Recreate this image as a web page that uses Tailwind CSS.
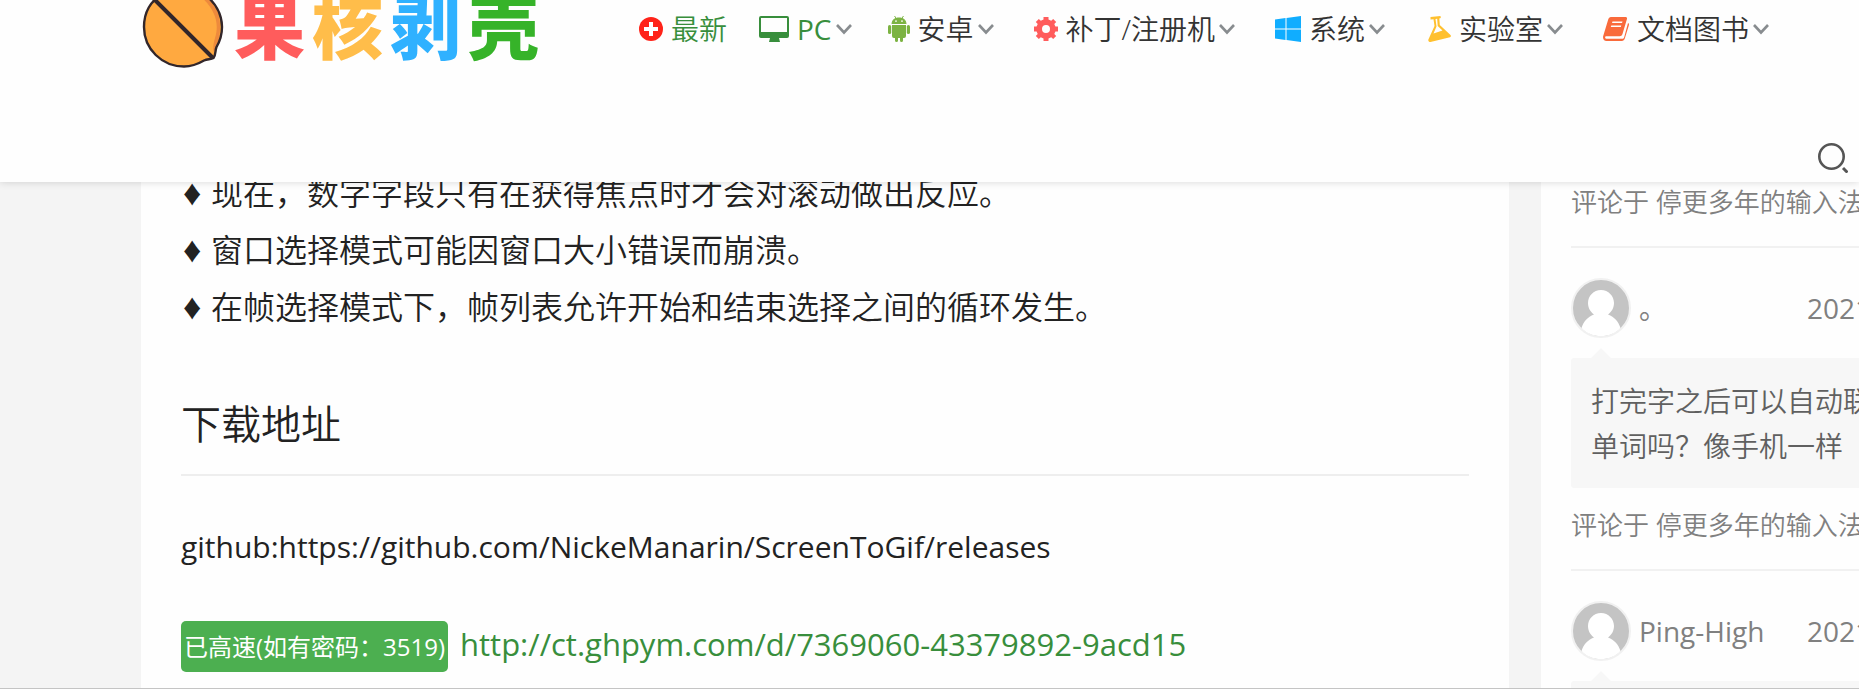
<!DOCTYPE html>
<html lang="zh-CN">
<head>
<meta charset="utf-8">
<meta name="viewport" content="width=device-width, initial-scale=1">
<title>果核剥壳</title>
<script src="https://cdn.jsdelivr.net/npm/@tailwindcss/browser@4"></script>
</head>
<body class="h-screen overflow-hidden bg-[#f4f4f4] font-['Open_Sans','Noto_Sans_CJK_SC',sans-serif] font-[350] text-[#222]">
<svg class="hidden" aria-hidden="true">
  <symbol id="chev" viewBox="0 0 16 12"><path d="M1 2l7 7.500 7-7.500" fill="none" stroke="#888c8f" stroke-width="2.600"/></symbol>
  <symbol id="avatar" viewBox="0 0 60 60"><circle cx="30" cy="30" r="29" fill="#c4c4c4" stroke="#f1f1f1" stroke-width="2"/><path d="M30 12c-7.500 0-13 6-13 13 0 5 2.500 9 6 11.500C16.500 39 12.500 43.500 10.500 50 15.500 55.500 22.500 58 30 58s14.500-2.500 19.500-8C47.500 43.500 43.500 39 37 36.500c3.500-2.500 6-6.500 6-11.500 0-7-5.500-13-13-13z" fill="#fff"/></symbol>
</svg>
<div class="flex h-full flex-col border-b border-[#c4c4c4]">
  <header class="relative z-10 h-[182px] shrink-0 bg-[#fefefe] shadow-[0_0_8px_rgba(0,0,0,0.16)]">
    <div class="flex h-[68px] items-start pl-[142px]">
      <a href="#" class="flex w-[497px] shrink-0 items-start" aria-label="果核剥壳">
        <svg class="h-[68px] w-[82px]" viewBox="0 0 82 68">
          <path d="M22-6C8 0 2 13 2 27c0 22 18 39.500 40 39.500 8 0 14-2.500 20-6 3.500-1.500 7-1 9.500-2.500 2.500-3 1.500-7.500 3-11C78 41 80 34 80 27 80 14 73 2 62-6z" fill="#ffa940"/>
          <path d="M58-4C72 8 78 22 73 38c-1.500 5-2 9-1.500 14l3-6C80 32 80 12 68-2z" fill="#ee8a3c"/>
          <path d="M22-6C8 0 2 13 2 27c0 22 18 39.500 40 39.500 8 0 14-2.500 20-6 3.500-1.500 7-1 9.500-2.500 2.500-3 1.500-7.500 3-11C78 41 80 34 80 27 80 14 73 2 62-6" fill="none" stroke="#32262a" stroke-width="2.400"/>
          <path d="M12-1l59 59" stroke="#32262a" stroke-width="4"/>
        </svg>
        <span class="-mt-[14px] ml-[10px] flex gap-[7px] text-[71px] leading-[80px] font-black"><span class="text-[#ff5c5c]">果</span><span class="text-[#ffbd4a]">核</span><span class="text-[#2fb1ff]">剥</span><span class="text-[#36b329]">壳</span></span>
      </a>
      <nav class="flex h-[58px] items-center text-[28px] whitespace-nowrap text-[#333]">
        <a href="#" class="mr-8 flex items-center text-[#388e3c]">
          <svg class="mr-2 size-6" viewBox="0 0 24 24"><circle cx="12" cy="12" r="12" fill="#ff2319"/><path d="M12 5v14M5 12h14" stroke="#fff" stroke-width="4"/></svg>最新</a>
        <a href="#" class="mr-9 flex items-center font-normal text-[#388e3c]">
          <svg class="mr-2 h-[26px] w-[30px]" viewBox="0 0 30 26"><path fill-rule="evenodd" d="M2 0h26a2 2 0 0 1 2 2v18a2 2 0 0 1-2 2h-8l1 4H10l1-4H2a2 2 0 0 1-2-2V2a2 2 0 0 1 2-2zM2 2v14h26V2z" fill="#388e3c"/></svg>PC<svg class="ml-1 h-3 w-4"><use href="#chev"/></svg></a>
        <a href="#" class="mr-10 flex items-center">
          <svg class="mr-2 h-[26px] w-[22px]" viewBox="0 0 22 26" fill="#7cb342"><path d="M4 8C4 5 6 3 8 2L6.500 0M18 8c0-3-2-5-4-6l1.500-2" fill="none" stroke="#7cb342"/><path fill-rule="evenodd" d="M4 8c0-4 3-6.500 7-6.500S18 4 18 8zM8 4.200a.9.900 0 1 0 0 1.800.9.900 0 0 0 0-1.800zm6 0a.9.900 0 1 0 0 1.800.9.900 0 0 0 0-1.800z"/><path d="M4 9h14v11a2 2 0 0 1-2 2h-1v2.500a1.500 1.500 0 0 1-3 0V22h-2v2.500a1.500 1.500 0 0 1-3 0V22H6a2 2 0 0 1-2-2z"/><rect y="9" width="3.200" height="9" rx="1.600"/><rect x="18.800" y="9" width="3.200" height="9" rx="1.600"/></svg>安卓<svg class="ml-1 h-3 w-4"><use href="#chev"/></svg></a>
        <a href="#" class="mr-10 flex items-center">
          <svg class="mr-2 size-6" viewBox="0 0 24 24" fill="#ff5c5c"><path fill-rule="evenodd" d="M9.500 0h5v2.600l2.700 1.200 2-1.900 3 3-1.900 2 1.100 2.600H24v5h-2.600l-1.100 2.600 1.900 2-3 3-2-1.900-2.700 1.200V24h-5v-2.600l-2.700-1.200-2 1.900-3-3 1.900-2-1.100-2.600H0v-5h2.600l1.100-2.600-1.900-2 3-3 2 1.900 2.700-1.200zM12 8a4 4 0 1 0 0 8 4 4 0 0 0 0-8z"/></svg>补丁/注册机<svg class="ml-1 h-3 w-4"><use href="#chev"/></svg></a>
        <a href="#" class="mr-10 flex items-center">
          <svg class="mr-2 size-[26px]" viewBox="0 0 26 26" fill="#10adff"><path d="M0 3.500l10.500-1.500v10.500H0zM11.500 1.900L26 0v12.500H11.500zM0 13.500h10.500V24L0 22.500zM11.500 13.500H26V26l-14.500-2z"/></svg>系统<svg class="ml-1 h-3 w-4"><use href="#chev"/></svg></a>
        <a href="#" class="mr-10 flex items-center">
          <svg class="mr-2 h-[26px] w-[26px]" viewBox="0 0 26 26" fill="#ffc02e"><path fill-rule="evenodd" d="M5.500 1L15.500 0l.3 2-1.500.4.500 6.600 10.700 10a1.500 1.500 0 0 1-.5 2.200L5.500 26C3.800 26 3 25 3.400 23.500L9.500 10 8.500 3.200l-3 .3zM10.500 3l1 7.500-3 7 9-3-4.800-4.500-.5-7.200z"/></svg>实验室<svg class="ml-1 h-3 w-4"><use href="#chev"/></svg></a>
        <a href="#" class="flex items-center">
          <svg class="mr-2 h-6 w-[26px]" viewBox="0 0 26 24" fill="#f96a3b"><path fill-rule="evenodd" d="M8 0h14.500c1.300 0 1.800 1 1.400 2.200l-4.500 15c-.4 1.300-1.400 2-2.700 2H3.500c-1.500 0-2 1.300-.6 2.600h16.300c1 0 1.600-.5 1.900-1.400L25 6c1 .5 1.200 1.300.8 2.500l-4 13c-.5 1.600-1.500 2.500-3 2.500H3.500C1 24-.5 21.500.2 19L5.200 2.500C5.700 1 6.500 0 8 0zM9.500 4.500L9 6h10l.5-1.500zM8.300 8.500L7.800 10h10l.5-1.500z"/></svg>文档图书<svg class="ml-1 h-3 w-4"><use href="#chev"/></svg></a>
      </nav>
    </div>
    <div class="flex justify-end pt-[75px] pr-[11px]">
      <button type="button" aria-label="搜索"><svg class="size-[30px]" viewBox="0 0 30 30" fill="none" stroke="#555"><circle cx="13.500" cy="13.500" r="12.200" stroke-width="2.600"/><path d="M25 25l4.500 4.500" stroke-width="3"/></svg></button>
    </div>
  </header>

  <div class="flex min-h-0 flex-1 gap-8 pl-[141px]">
    <main class="min-w-0 flex-1 overflow-hidden bg-[#fefefe] px-10">
      <ul class="-mt-[18px] text-[32px] leading-[57px] whitespace-nowrap">
        <li class="flex"><span class="w-[30px] pl-[2px] font-['Liberation_Sans'] text-[36px]">♦</span>现在，数字字段只有在获得焦点时才会对滚动做出反应。</li>
        <li class="flex"><span class="w-[30px] pl-[2px] font-['Liberation_Sans'] text-[36px]">♦</span>窗口选择模式可能因窗口大小错误而崩溃。</li>
        <li class="flex"><span class="w-[30px] pl-[2px] font-['Liberation_Sans'] text-[36px]">♦</span>在帧选择模式下，帧列表允许开始和结束选择之间的循环发生。</li>
      </ul>
      <h2 class="mt-[59px] border-b-2 border-[#eee] pb-[20px] text-[40px] leading-[60px]">下载地址</h2>
      <p class="mt-[42px] text-[30px] leading-[57px] font-normal">github:https://github.com/NickeManarin/ScreenToGif/releases</p>
      <p class="mt-[46px] flex items-start font-normal whitespace-nowrap">
        <span class="mr-3 rounded-[5px] bg-[#4caf50] px-[3px] text-[24px] leading-[51px] text-white">已高速(如有密码：3519)</span>
        <a href="#" class="text-[31px] leading-[47px] text-[#388e3c]">http://ct.ghpym.com/d/7369060-43379892-9acd15</a>
      </p>
    </main>
    <aside class="w-[318px] shrink-0 overflow-hidden bg-[#fefefe] pl-[30px] whitespace-nowrap text-[#808080]">
      <p class="border-b-2 border-[#f1f1f1] pb-[24px] text-[26px] leading-[40px]">评论于 停更多年的输入法，</p>
      <div class="mt-[30px] flex items-center text-[28px] leading-[60px] font-normal">
        <svg class="mr-2 size-[60px] shrink-0"><use href="#avatar"/></svg><span class="w-[168px] shrink-0">。</span><time>2021-11</time>
      </div>
      <svg class="mt-[10px] ml-5 block h-[10px] w-5" viewBox="0 0 20 10"><path d="M0 10L10 0l10 10z" fill="#f7f7f7"/></svg>
      <p class="rounded-l-[3px] bg-[#f7f7f7] px-5 pt-[21px] pb-[19px] text-[28px] leading-[45px] text-[#606060]">打完字之后可以自动联想<br>单词吗？像手机一样</p>
      <p class="mt-[17px] border-b-2 border-[#f1f1f1] pb-[24px] text-[26px] leading-[40px]">评论于 停更多年的输入法，</p>
      <div class="mt-[30px] flex items-center text-[28px] leading-[60px] font-normal">
        <svg class="mr-2 size-[60px] shrink-0"><use href="#avatar"/></svg><span class="w-[168px] shrink-0">Ping-High</span><time>2021-11</time>
      </div>
      <svg class="mt-[10px] ml-5 block h-[10px] w-5" viewBox="0 0 20 10"><path d="M0 10L10 0l10 10z" fill="#f7f7f7"/></svg>
      <div class="h-[130px] rounded-l-[3px] bg-[#f7f7f7]"></div>
    </aside>
  </div>
</div>
</body>
</html>
